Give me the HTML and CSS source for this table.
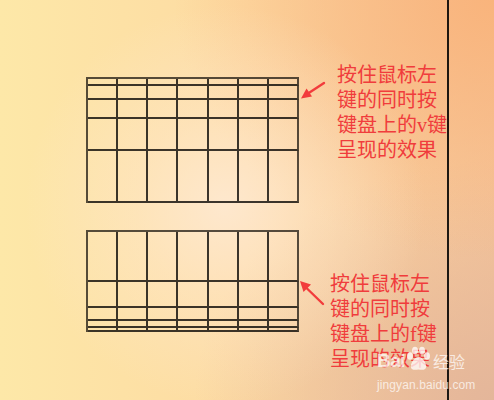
FILE: index.html
```html
<!DOCTYPE html>
<html>
<head>
<meta charset="utf-8">
<link rel="stylesheet" href="styles.css">
</head>
<body>
<div class="page">
  <div class="canvas">
    <div class="section s1">
      <div class="grid g1">
        <div></div><div></div><div></div><div></div><div></div><div></div><div></div>
        <div></div><div></div><div></div><div></div><div></div><div></div><div></div>
        <div></div><div></div><div></div><div></div><div></div><div></div><div></div>
        <div></div><div></div><div></div><div></div><div></div><div></div><div></div>
        <div></div><div></div><div></div><div></div><div></div><div></div><div></div>
      </div>
      <svg class="arrow a1" width="38" height="24" viewBox="0 0 38 24">
        <line x1="25" y1="4" x2="9" y2="14.5" stroke="#f23c3c" stroke-width="2.4" stroke-linecap="round"/>
        <polygon points="2,19.5 7.5,9.5 13,17.5" fill="#f23c3c"/>
      </svg>
      <div class="note n1">按住鼠标左<br>键的同时按<br>键盘上的v键<br>呈现的效果</div>
    </div>
    <div class="section s2">
      <div class="grid g2">
        <div></div><div></div><div></div><div></div><div></div><div></div><div></div>
        <div></div><div></div><div></div><div></div><div></div><div></div><div></div>
        <div></div><div></div><div></div><div></div><div></div><div></div><div></div>
        <div></div><div></div><div></div><div></div><div></div><div></div><div></div>
        <div></div><div></div><div></div><div></div><div></div><div></div><div></div>
      </div>
      <svg class="arrow a2" width="31" height="30" viewBox="0 0 31 30">
        <line x1="24" y1="26" x2="8" y2="10.5" stroke="#f23c3c" stroke-width="2.4" stroke-linecap="round"/>
        <polygon points="1,3 12,6.5 4.5,14" fill="#f23c3c"/>
      </svg>
      <div class="note n2">按住鼠标左<br>键的同时按<br>键盘上的f键<br>呈现的效果</div>
    </div>
  </div>
  <div class="vline"></div>
  <div class="rest"></div>
  <div class="watermark">
    <div class="wm-top">
      <span class="wm-bai">Bai</span>
      <svg class="wm-paw" width="26" height="26" viewBox="0 0 26 26">
        <ellipse cx="5" cy="10" rx="3" ry="3.8" fill="rgba(255,255,255,0.75)"/>
        <ellipse cx="10" cy="4.5" rx="3" ry="3.8" fill="rgba(255,255,255,0.75)"/>
        <ellipse cx="17" cy="4.5" rx="3" ry="3.8" fill="rgba(255,255,255,0.75)"/>
        <ellipse cx="22" cy="10" rx="3" ry="3.8" fill="rgba(255,255,255,0.75)"/>
        <path d="M13.5 11 C9 11 5 18 6 21.5 C7 25 11 23.5 13.5 23.5 C16 23.5 20 25 21 21.5 C22 18 18 11 13.5 11 Z" fill="rgba(255,255,255,0.75)"/>
      </svg>
      <span class="wm-jy">经验</span>
    </div>
    <div class="wm-url">jingyan.baidu.com</div>
  </div>
</div>
</body>
</html>
```

FILE: styles.css
```css
html, body {
  margin: 0;
  padding: 0;
}
.page {
  position: relative;
  width: 494px;
  height: 400px;
  overflow: hidden;
  display: flex;
  background:
    radial-gradient(circle at 225px 205px, rgba(255,236,220,0.75) 0, rgba(255,234,214,0.4) 90px, rgba(255,230,205,0) 200px),
    radial-gradient(ellipse 320px 260px at 100% 0%, #f9b47c 0, rgba(249,180,124,0) 100%),
    radial-gradient(ellipse 300px 240px at 100% 100%, #e4b69a 0, rgba(228,182,154,0) 100%),
    linear-gradient(to right, #fde8a8 0%, #fddaa2 50%, #f5c59a 100%);
  font-family: "Liberation Serif", "Noto Sans CJK SC", serif;
}
.canvas {
  width: 447px;
  padding: 63px 0 0 86px;
  box-sizing: border-box;
  display: flex;
  flex-direction: column;
  gap: 27px;
}
.vline {
  width: 2px;
  background: rgba(0,0,0,0.88);
}
.rest {
  flex: 1;
}
.section {
  display: flex;
  align-items: flex-start;
}
.grid {
  display: grid;
  grid-template-columns: 30px 30px 30px 31px 30px 30px 30px;
  border-top: 2px solid rgba(20,15,10,0.72);
  border-left: 2px solid rgba(20,15,10,0.72);
}
.grid > div {
  border-right: 2px solid rgba(10,8,5,0.8);
  border-bottom: 2px solid rgba(10,8,5,0.8);
  box-sizing: border-box;
}
.grid > div:nth-child(7n) {
  border-right-color: rgba(20,15,10,0.72);
}
.g1 {
  margin-top: 14px;
  grid-template-rows: 7px 14px 19px 32px 52px;
}
.g2 {
  grid-template-rows: 50px 26px 13px 7px 4px;
}
.arrow {
  flex: none;
  display: block;
}
.a1 {
  margin-top: 16px;
}
.a2 {
  margin-top: 48px;
}
.note {
  color: #f03c3c;
  font-size: 20px;
  line-height: 25px;
  white-space: nowrap;
}
.n2 {
  margin-top: 42px;
}
.watermark {
  position: absolute;
  left: 377px;
  top: 346px;
  color: rgba(255,255,255,0.72);
}
.wm-top {
  display: flex;
  align-items: center;
  height: 30px;
}
.wm-bai {
  font-family: "Liberation Sans", sans-serif;
  font-weight: bold;
  font-size: 19px;
  letter-spacing: -0.5px;
}
.wm-paw {
  margin-top: -4px;
  display: block;
}
.wm-jy {
  font-family: "Noto Sans CJK SC", sans-serif;
  font-size: 16px;
  margin-left: 2px;
}
.wm-url {
  font-family: "Liberation Sans", sans-serif;
  font-size: 12px;
  line-height: 14px;
  margin-top: 2px;
  letter-spacing: 0.1px;
}
```
